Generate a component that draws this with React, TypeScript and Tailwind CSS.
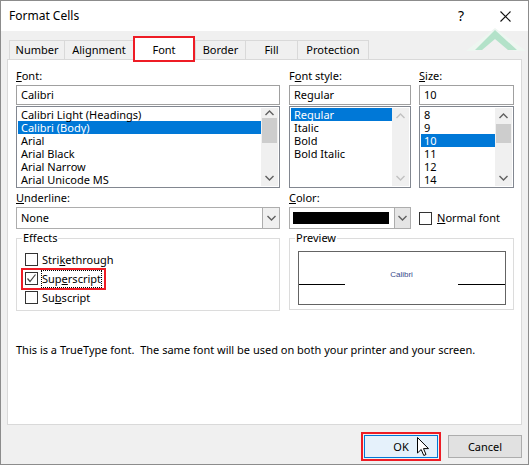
import React from 'react'

const FONTS = ['Calibri Light (Headings)', 'Calibri (Body)', 'Arial', 'Arial Black', 'Arial Narrow', 'Arial Unicode MS']
const STYLES = ['Regular', 'Italic', 'Bold', 'Bold Italic']
const SIZES = ['8', '9', '10', '11', '12', '14']

const TABS = [
  { label: 'Number', w: 'w-[55px]' },
  { label: 'Alignment', w: 'w-[69px]' },
  { label: 'Font', w: 'w-[62px]', active: true },
  { label: 'Border', w: 'w-[50px]' },
  { label: 'Fill', w: 'w-[52px]' },
  { label: 'Protection', w: 'w-[72px]', last: true },
]

function Chevron({ up, light }: { up?: boolean; light?: boolean }) {
  return (
    <svg width="9" height="6" viewBox="0 0 9 6" className="block">
      <polyline
        points={up ? '0.5,5 4.5,1 8.5,5' : '0.5,1 4.5,5 8.5,1'}
        fill="none"
        stroke={light ? '#c2c2c2' : '#606060'}
        strokeWidth="1.4"
      />
    </svg>
  )
}

function Scrollbar({ thumbTop, thumbH, disabled }: { thumbTop: string; thumbH: string; disabled?: boolean }) {
  return (
    <div className="flex w-[17px] flex-col bg-[#f0f0f0]">
      <div className={`flex ${thumbTop} items-center justify-center`}>
        <Chevron up light={disabled} />
      </div>
      {!disabled && <div className={`${thumbH} mx-[1px] bg-[#cdcdcd]`} />}
      <div className="flex-1" />
      <div className="flex h-[16px] items-center justify-center">
        <Chevron light={disabled} />
      </div>
    </div>
  )
}

function ListBox({
  items,
  selected,
  thumbTop,
  thumbH,
  disabled,
}: {
  items: string[]
  selected: string
  thumbTop: string
  thumbH: string
  disabled?: boolean
}) {
  return (
    <div className="mt-px flex h-[82px] border border-[#828790] bg-white p-px">
      <div className="flex-1 overflow-hidden">
        {items.map((it) => (
          <div
            key={it}
            className={`h-[13px] whitespace-nowrap pl-[3px] leading-[13px] ${
              it === selected ? 'bg-[#0078d7] text-white' : 'text-black'
            }`}
          >
            {it}
          </div>
        ))}
      </div>
      <Scrollbar thumbTop={thumbTop} thumbH={thumbH} disabled={disabled} />
    </div>
  )
}

function TextBox({ value }: { value: string }) {
  return (
    <div className="mt-px h-[20px] border border-[#a0a0a0] bg-white pl-[4px] leading-[18px] text-black">{value}</div>
  )
}

function Label({ children }: { children: React.ReactNode }) {
  return <div className="h-[16px] leading-[16px] text-black">{children}</div>
}

function CheckBox({ checked }: { checked?: boolean }) {
  return (
    <div className="flex h-[13px] w-[13px] shrink-0 items-center justify-center border border-[#333333] bg-white">
      {checked && (
        <svg width="11" height="11" viewBox="0 0 11 11">
          <polyline points="1.5,5.5 4,8.5 9.5,1.5" fill="none" stroke="#444" strokeWidth="1.2" />
        </svg>
      )}
    </div>
  )
}

export default function App() {
  return (
    <div className="h-[465px] w-[530px] bg-white font-['Noto_Sans',sans-serif] text-[11px] text-black">
      <div className="relative flex h-[465px] w-[529px] flex-col border border-[#8c8c8c]">
        {/* title bar */}
        <div className="flex h-[30px] items-center bg-white pl-[8px]">
          <span className="text-[12px] leading-[16px]">Format Cells</span>
          <span className="ml-auto mr-[36px] text-[14px] leading-[16px]">?</span>
          <svg width="11" height="11" viewBox="0 0 11 11" className="mr-[17px]">
            <path d="M0.5,0.5 L10.5,10.5 M10.5,0.5 L0.5,10.5" stroke="#111" strokeWidth="1.1" />
          </svg>
        </div>

        <div className="flex flex-1 flex-col bg-[#f0f0f0] pl-[6px] pr-[6px]">
          {/* tabs */}
          <div className="flex h-[28px] items-end pl-[2px]">
            {TABS.map((t) =>
              t.active ? (
                <div
                  key={t.label}
                  className={`relative z-10 -mb-[3px] flex h-[26px] ${t.w} items-start justify-center border-2 border-[#ee1c25] bg-white pt-[4px] leading-[16px]`}
                >
                  {t.label}
                </div>
              ) : (
                <div
                  key={t.label}
                  className={`flex h-[19px] ${t.w} items-center justify-center border-l border-t border-[#d9d9d9] ${
                    t.last ? 'border-r' : ''
                  } leading-[16px]`}
                >
                  {t.label}
                </div>
              ),
            )}
          </div>

          {/* panel */}
          <div className="h-[366px] border border-[#d9d9d9] bg-white pl-[8px] pt-[8px]">
            <div className="flex">
              <div className="w-[264px]">
                <Label>
                  <u>F</u>ont:
                </Label>
                <TextBox value="Calibri" />
                <ListBox items={FONTS} selected="Calibri (Body)" thumbTop="h-[10px]" thumbH="h-[25px]" />
              </div>
              <div className="ml-[9px] w-[122px]">
                <Label>
                  F<u>o</u>nt style:
                </Label>
                <TextBox value="Regular" />
                <ListBox items={STYLES} selected="Regular" thumbTop="h-[16px]" thumbH="h-0" disabled />
              </div>
              <div className="ml-[8px] w-[95px]">
                <Label>
                  <u>S</u>ize:
                </Label>
                <TextBox value="10" />
                <ListBox items={SIZES} selected="10" thumbTop="h-[16px]" thumbH="h-[19px]" />
              </div>
            </div>

            <div className="mt-[2px] flex">
              <div className="w-[264px]">
                <Label>
                  <u>U</u>nderline:
                </Label>
                <div className="mt-px flex h-[22px] border border-[#adadad] bg-white">
                  <span className="pl-[4px] leading-[20px]">None</span>
                  <div className="ml-auto flex w-[17px] items-center justify-center border-l border-[#adadad] bg-[#f0f0f0]">
                    <Chevron />
                  </div>
                </div>
              </div>
              <div className="ml-[9px] w-[122px]">
                <Label>
                  <u>C</u>olor:
                </Label>
                <div className="mt-px flex h-[22px] items-center border border-[#adadad] bg-white">
                  <div className="ml-[3px] h-[12px] w-[96px] bg-black" />
                  <div className="ml-auto flex h-full w-[16px] items-center justify-center border-l border-[#adadad] bg-[#e5e5e5]">
                    <Chevron />
                  </div>
                </div>
              </div>
              <div className="ml-[8px] mt-[17px] flex h-[22px] w-[95px] items-center">
                <CheckBox />
                <span className="ml-[5px] leading-[16px]">
                  <u>N</u>ormal font
                </span>
              </div>
            </div>

            <div className="mt-px flex">
              <fieldset className="h-[81px] w-[264px] border border-[#dcdcdc]">
                <legend className="ml-[5px] px-px leading-[16px]">Effects</legend>
                <div className="pl-[8px] pt-[4px]">
                  <div className="flex h-[19px] items-center">
                    <CheckBox />
                    <span className="ml-[4px] leading-[16px]">
                      Stri<u>k</u>ethrough
                    </span>
                  </div>
                  <div className="relative flex h-[19px] items-center">
                    <CheckBox checked />
                    <span className="ml-[3px] border border-dotted border-black leading-[16px]">
                      Sup<u>e</u>rscript
                    </span>
                    <div className="absolute -left-[4px] top-[-1px] h-[22px] w-[85px] border-2 border-[#ee1c25]" />
                  </div>
                  <div className="flex h-[19px] items-center">
                    <CheckBox />
                    <span className="ml-[4px] leading-[16px]">
                      Su<u>b</u>script
                    </span>
                  </div>
                </div>
              </fieldset>
              <fieldset className="ml-[9px] h-[80px] w-[225px] border border-[#dcdcdc]">
                <legend className="ml-[5px] px-px leading-[16px]">Preview</legend>
                <div className="ml-[8px] mr-[7px] mt-[5px] flex h-[54px] items-start border border-[#646464] pt-[32px]">
                  <div className="w-[46px] border-t border-black" />
                  <div className="-mt-[14px] flex-1 text-center font-['Liberation_Sans',sans-serif] text-[8px] leading-[10px] text-[#3a4a8a]">
                    Calibri
                  </div>
                  <div className="w-[47px] border-t border-black" />
                </div>
              </fieldset>
            </div>

            <p className="mt-[31px] whitespace-pre leading-[16px]">
              This is a TrueType font.  The same font will be used on both your printer and your screen.
            </p>
          </div>

          {/* buttons */}
          <div className="flex flex-1 items-start justify-end gap-[10px] pt-[10px]">
            <button className="relative h-[23px] w-[74px] border border-[#0078d7] bg-[#e5f1fb] leading-[16px]">
              OK
              <span className="absolute -inset-[4px] border-2 border-[#ee1c25]" />
            </button>
            <button className="h-[23px] w-[74px] border border-[#adadad] bg-[#e1e1e1] leading-[16px]">Cancel</button>
          </div>
        </div>

        {/* watermark chevron */}
        <svg width="60" height="24" viewBox="0 0 60 24" className="absolute left-[465px] top-[27px]">
          <polygon points="29,0 60,23 48,23 29,9 10,23 0,23" fill="#eef6f1" />
          <polygon points="29,2 51,22 42,22 29,11 16,22 9,22" fill="#b3e2c9" />
        </svg>

        {/* mouse cursor */}
        <svg width="13" height="20" viewBox="0 0 13 20" className="absolute left-[416px] top-[436px]">
          <path
            d="M0.5,0.5 L0.5,16 L4.2,12.5 L6.8,18.5 L9,17.5 L6.5,11.6 L11.5,11.6 Z"
            fill="#fff"
            stroke="#000"
            strokeWidth="1"
            strokeLinejoin="round"
          />
        </svg>
      </div>
    </div>
  )
}
